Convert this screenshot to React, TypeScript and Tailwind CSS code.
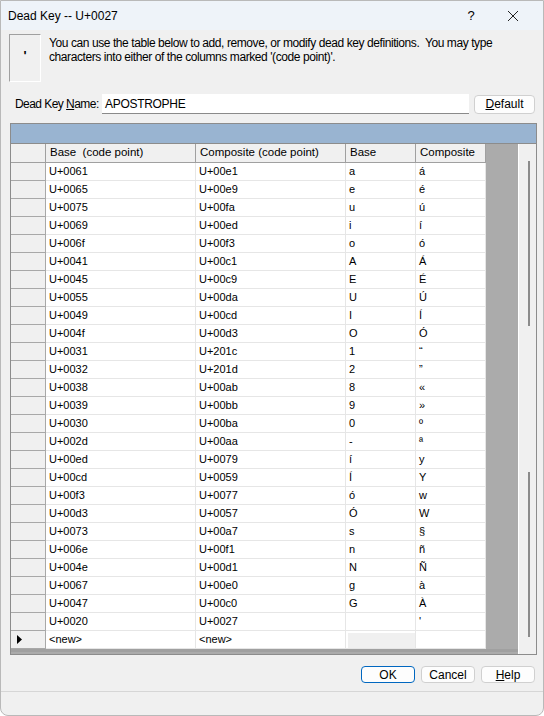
import React from 'react';

const rows: [string, string, string, string][] = [
  ['U+0061', 'U+00e1', 'a', 'á'],
  ['U+0065', 'U+00e9', 'e', 'é'],
  ['U+0075', 'U+00fa', 'u', 'ú'],
  ['U+0069', 'U+00ed', 'i', 'í'],
  ['U+006f', 'U+00f3', 'o', 'ó'],
  ['U+0041', 'U+00c1', 'A', 'Á'],
  ['U+0045', 'U+00c9', 'E', 'É'],
  ['U+0055', 'U+00da', 'U', 'Ú'],
  ['U+0049', 'U+00cd', 'I', 'Í'],
  ['U+004f', 'U+00d3', 'O', 'Ó'],
  ['U+0031', 'U+201c', '1', '“'],
  ['U+0032', 'U+201d', '2', '”'],
  ['U+0038', 'U+00ab', '8', '«'],
  ['U+0039', 'U+00bb', '9', '»'],
  ['U+0030', 'U+00ba', '0', 'º'],
  ['U+002d', 'U+00aa', '-', 'ª'],
  ['U+00ed', 'U+0079', 'í', 'y'],
  ['U+00cd', 'U+0059', 'Í', 'Y'],
  ['U+00f3', 'U+0077', 'ó', 'w'],
  ['U+00d3', 'U+0057', 'Ó', 'W'],
  ['U+0073', 'U+00a7', 's', '§'],
  ['U+006e', 'U+00f1', 'n', 'ñ'],
  ['U+004e', 'U+00d1', 'N', 'Ñ'],
  ['U+0067', 'U+00e0', 'g', 'à'],
  ['U+0047', 'U+00c0', 'G', 'À'],
  ['U+0020', 'U+0027', ' ', "'"],
];

const cell = 'h-[18px] px-[3px] flex items-center border-r border-b border-[#e6e6e6] bg-white overflow-hidden whitespace-pre';
const rowHead = 'w-[35px] h-[18px] bg-[#f0f0f0] border-r border-b border-[#a8a8a8] flex items-center';
const headCell = 'h-[19px] px-[4px] flex items-center bg-[#f0f0f0] border-r border-b border-[#a0a0a0] whitespace-pre';

const App: React.FC = () => {
  return (
    <div className="w-[544px] h-[716px] bg-white">
      <div className="w-[544px] h-[716px] flex flex-col bg-[#f0f0f0] border border-[#b9b9b9] rounded-b-[8px] overflow-hidden text-[12px] text-black font-['Liberation_Sans',Arial,sans-serif]">
        {/* Title bar */}
        <div className="h-[29px] shrink-0 flex items-center bg-[#eef3f9] pl-[7px]">
          <span className="text-[12px]">Dead Key -- U+0027</span>
          <span className="ml-auto text-[13px] w-[20px] text-center">?</span>
          <span className="ml-[20px] mr-[18px] w-[24px] flex justify-center">
            <svg width="12" height="12" viewBox="0 0 12 12" fill="none" stroke="#222" strokeWidth="1">
              <path d="M1 1 L11 11 M11 1 L1 11" />
            </svg>
          </span>
        </div>

        {/* Info */}
        <div className="flex mt-[4px] pl-[8px]">
          <div className="w-[32px] h-[48px] border border-l-[#a0a0a0] border-t-[#a0a0a0] border-r-white border-b-white flex justify-center pt-[14px]">
            <span className="font-bold text-[13px] leading-none">'</span>
          </div>
          <p className="ml-[8px] mt-[2px] text-[12px] leading-[14px] tracking-[-0.42px] whitespace-pre">
            {'You can use the table below to add, remove, or modify dead key definitions.  You may type\ncharacters into either of the columns marked \'(code point)\'.'}
          </p>
        </div>

        {/* Dead key name */}
        <div className="flex items-center mt-[12px] pl-[14px] pr-[8px]">
          <span className="w-[87px] shrink-0 whitespace-nowrap tracking-[-0.55px]">
            Dead Key <span className="underline">N</span>ame:
          </span>
          <div className="w-[367px] h-[20px] shrink-0 bg-white border-b border-[#8a8a8a] flex items-center px-[3px] tracking-[-0.3px]">APOSTROPHE</div>
          <button className="ml-auto w-[61px] h-[19px] bg-[#fdfdfd] border border-[#d0d0d0] rounded-[4px] flex items-center justify-center">
            <span className="underline">D</span>efault
          </button>
        </div>

        {/* Grid */}
        <div className="mt-[9px] ml-[9px] w-[527px] h-[532px] shrink-0 border border-[#8c8c8c] flex flex-col bg-[#ababab]">
          <div className="h-[20px] shrink-0 bg-[#99b4d1] border-b border-[#8c8c8c]"></div>
          <div className="flex flex-1 min-h-0">
            <div className="flex flex-col w-[507px] bg-[#ababab]">
              <div className="flex text-[11.5px]">
                <div className="w-[35px] h-[19px] bg-[#f0f0f0] border-r border-b border-[#a0a0a0]"></div>
                <div className={`${headCell} w-[150px]`}>Base  (code point)</div>
                <div className={`${headCell} w-[150px]`}>Composite (code point)</div>
                <div className={`${headCell} w-[70px]`}>Base</div>
                <div className={`${headCell} w-[70px]`}>Composite</div>
              </div>
              {rows.map((r, i) => (
                <div key={i} className="flex text-[11px]">
                  <div className={rowHead}></div>
                  <div className={`${cell} w-[150px]`}>{r[0]}</div>
                  <div className={`${cell} w-[150px]`}>{r[1]}</div>
                  <div className={`${cell} w-[70px]`}>{r[2]}</div>
                  <div className={`${cell} w-[70px]`}>{r[3]}</div>
                </div>
              ))}
              <div className="flex text-[11px]">
                <div className={`${rowHead} pl-[6px]`}>
                  <svg width="5" height="9" viewBox="0 0 5 9">
                    <path d="M0 0 L5 4.5 L0 9 Z" fill="#000" />
                  </svg>
                </div>
                <div className={`${cell} w-[150px]`}>{'<new>'}</div>
                <div className={`${cell} w-[150px]`}>{'<new>'}</div>
                <div className="w-[70px] h-[18px] bg-white border-r border-b border-[#e6e6e6] flex items-end pl-[2px]">
                  <div className="w-[67px] h-[15px] bg-[#f0f0f0]"></div>
                </div>
                <div className={`${cell} w-[70px]`}></div>
              </div>
              <div className="flex-1 border-t-[3px] border-[#a0a0a0]"></div>
            </div>
            {/* Scrollbar */}
            <div className="w-[18px] bg-[#f0f0f0] border-l border-white flex flex-col items-center pt-[17px]">
              <div className="w-[2px] h-[165px] bg-[#8b8b8b] ml-[2px]"></div>
              <div className="h-[146px]"></div>
              <div className="w-[2px] h-[165px] bg-[#8b8b8b] ml-[2px]"></div>
            </div>
          </div>
        </div>

        {/* Buttons */}
        <div className="flex justify-end gap-[6px] mt-[11px] pr-[8px]">
          <button className="w-[54px] h-[17px] bg-[#fdfdfd] border border-[#0067c0] rounded-[4px] flex items-center justify-center">OK</button>
          <button className="w-[54px] h-[17px] bg-[#fdfdfd] border border-[#d0d0d0] rounded-[4px] flex items-center justify-center">Cancel</button>
          <button className="w-[54px] h-[17px] bg-[#fdfdfd] border border-[#d0d0d0] rounded-[4px] flex items-center justify-center">
            <span className="underline">H</span>elp
          </button>
        </div>

        <div className="mt-auto h-[24px] border-t border-[#d6d6d6]"></div>
      </div>
    </div>
  );
};

export default App;
